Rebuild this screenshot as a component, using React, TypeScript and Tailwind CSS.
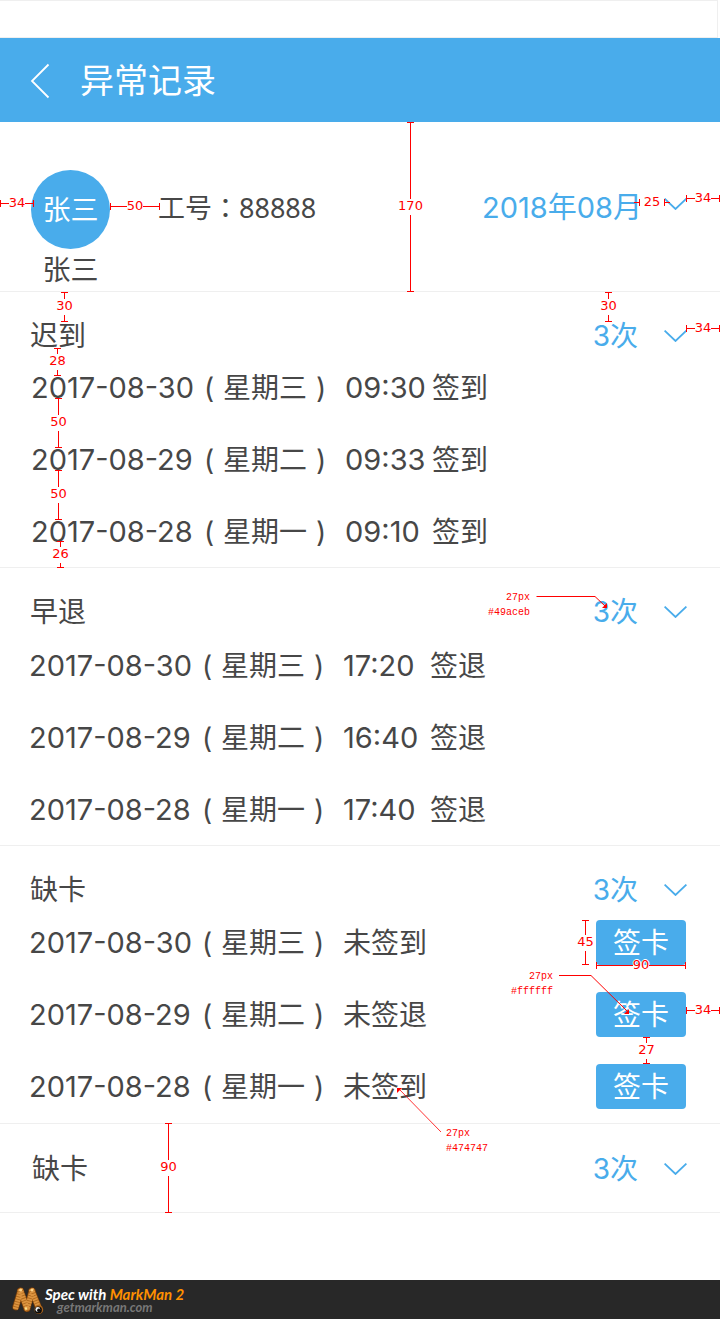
import React from "react";

const blue = "text-[#49aceb]";

function Chevron({ className = "" }: { className?: string }) {
  return (
    <svg className={`h-3 w-[23px] shrink-0 ${className}`} viewBox="0 0 23 12" fill="none" stroke="currentColor" strokeWidth="1.8" aria-hidden="true">
      <path d="M0.6 0.6 11.5 11 22.4 0.6" />
    </svg>
  );
}

function Tall({ label, className }: { label: string; className: string }) {
  return (
    <div className={`pointer-events-none absolute flex w-[21px] flex-col items-center ${className}`}>
      <i className="h-px w-[7px] bg-[#ff0000]" />
      <i className="w-px flex-1 bg-[#ff0000]" />
      <span className="pb-[2px] text-[13px] leading-[14px]">{label}</span>
      <i className="w-px flex-1 bg-[#ff0000]" />
      <i className="h-px w-[7px] bg-[#ff0000]" />
    </div>
  );
}

function Wide({ label, className }: { label: string; className: string }) {
  return (
    <div className={`pointer-events-none absolute flex h-4 items-center ${className}`}>
      <i className="h-[7px] w-px bg-[#ff0000]" />
      <i className="h-px flex-1 bg-[#ff0000]" />
      <span className="text-[13px] leading-4 [text-shadow:1px_0_#fff,-1px_0_#fff,0_1px_#fff,0_-1px_#fff]">{label}</span>
      <i className="h-px flex-1 bg-[#ff0000]" />
      <i className="h-[7px] w-px bg-[#ff0000]" />
    </div>
  );
}

function Note({ color, className }: { color: string; className: string }) {
  return (
    <div className={`pointer-events-none absolute font-['Liberation_Mono',monospace] text-[10px] leading-[15px] ${className}`}>
      <p>27px</p>
      <p>{color}</p>
    </div>
  );
}

const Marks = ({ children }: { children: React.ReactNode }) => (
  <div className="contents font-['DejaVu_Sans',sans-serif] font-normal text-[#ff0000]">{children}</div>
);

type Row = { date: string; day: string; time?: string; status: string };

type SectionProps = {
  title: string;
  headClass: string;
  listClass?: string;
  rows?: Row[];
  action?: boolean;
  children?: React.ReactNode;
};

function Section({ title, headClass, listClass = "", rows = [], action, children }: SectionProps) {
  return (
    <section className="relative border-b border-[#efefef]">
      <div className={`flex items-start justify-between pr-[33px] ${headClass}`}>
        <h2>{title}</h2>
        <button type="button" aria-expanded={rows.length > 0} className={`flex items-center gap-[26px] ${blue}`}>
          3次
          <Chevron />
        </button>
      </div>
      <ul className={listClass}>
        {rows.map((r) => (
          <li key={r.date} className="flex h-[72px] items-center justify-between pr-[34px]">
            <p className="flex items-baseline pt-[2px]">
              <span className="w-[164px] text-[29px]">{r.date}</span>
              <span className="w-7 text-center">(</span>
              <span>{r.day}</span>
              <span className="w-7 text-center">)</span>
              {r.time && <span className="ml-[10px] w-[77px] text-[29px]">{r.time}</span>}
              <span className="ml-[10px]">{r.status}</span>
            </p>
            {action && (
              <button type="button" className="h-[45px] w-[90px] rounded bg-[#49aceb] pt-[2px] text-white">
                签卡
              </button>
            )}
          </li>
        ))}
      </ul>
      {children}
    </section>
  );
}

const late: Row[] = [
  { date: "2017-08-30", day: "星期三", time: "09:30", status: "签到" },
  { date: "2017-08-29", day: "星期二", time: "09:33", status: "签到" },
  { date: "2017-08-28", day: "星期一", time: "09:10", status: "签到" },
];

const early: Row[] = [
  { date: "2017-08-30", day: "星期三", time: "17:20", status: "签退" },
  { date: "2017-08-29", day: "星期二", time: "16:40", status: "签退" },
  { date: "2017-08-28", day: "星期一", time: "17:40", status: "签退" },
];

const missing: Row[] = [
  { date: "2017-08-30", day: "星期三", status: "未签到" },
  { date: "2017-08-29", day: "星期二", status: "未签退" },
  { date: "2017-08-28", day: "星期一", status: "未签到" },
];

export default function App() {
  return (
    <div className="bg-white font-['Inter','Noto_Sans_CJK_SC',sans-serif] text-[28px] leading-8 font-[390] text-[#474747]">
      <div className="mr-[2px] h-[38px] border-y border-r border-[#efefef]" />
      <header className="flex h-[84px] items-center gap-[30px] bg-[#49aceb] pt-[2px] pl-[30px] text-white">
        <button type="button" aria-label="返回">
          <svg className="h-9 w-5" viewBox="0 0 20 36" fill="none" stroke="currentColor" strokeWidth="1.8">
            <path d="M18.5 1.5 2 18 18.5 34.5" />
          </svg>
        </button>
        <h1 className="text-[34px] leading-10">异常记录</h1>
      </header>

      <section className="relative flex h-[170px] items-start justify-between border-b border-[#efefef] pt-12 pr-[33px] pl-[31px]">
        <div className="flex gap-12">
          <div className="flex flex-col items-center">
            <div className="flex size-[79px] items-center justify-center rounded-full bg-[#49aceb] text-white">张三</div>
            <p className="leading-[42px]">张三</p>
          </div>
          <p className="font-['Noto_Sans','Noto_Sans_CJK_TC',sans-serif] text-[27px] leading-[76px]">工号：88888</p>
        </div>
        <button type="button" className={`flex h-[76px] items-center gap-[22px] ${blue}`}>
          <span className="text-[29px]">2018年08月</span>
          <Chevron className="mb-2" />
        </button>
        <Marks>
          <Wide label="34" className="top-[73px] left-0 w-[34px]" />
          <Wide label="50" className="top-[76px] left-[110px] w-[50px]" />
          <Tall label="170" className="top-0 left-[400px] h-[170px]" />
          <Wide label="34" className="top-[68px] right-0 w-[34px]" />
          <div className="pointer-events-none absolute top-[72px] right-[50px] flex h-4 w-9 items-center">
            <i className="h-px w-[5px] bg-[#ff0000]" />
            <i className="h-[7px] w-px bg-[#ff0000]" />
            <span className="flex-1 text-center text-[13px] leading-4">25</span>
            <i className="h-[7px] w-px bg-[#ff0000]" />
            <i className="h-px w-[5px] bg-[#ff0000]" />
          </div>
        </Marks>
      </section>

      <Section title="迟到" headClass="h-[59px] pt-7 pl-[30px]" listClass="pl-[31px]" rows={late}>
        <Marks>
          <Tall label="30" className="top-0 left-[54px] h-[30px]" />
          <Tall label="30" className="top-0 right-[101px] h-[30px]" />
          <Wide label="34" className="top-7 right-0 w-[34px]" />
          <Tall label="28" className="top-14 left-[47px] h-7" />
          <Tall label="50" className="top-[106px] left-12 h-[50px]" />
          <Tall label="50" className="top-[178px] left-12 h-[50px]" />
          <Tall label="26" className="top-[249px] left-[50px] h-[27px]" />
        </Marks>
      </Section>

      <Section title="早退" headClass="h-[61px] pt-7 pl-[30px]" listClass="pl-[29px]" rows={early}>
        <Marks>
          <Note color="#49aceb" className="top-[22px] right-[190px] text-right" />
          <svg className="pointer-events-none absolute top-7 right-[112px] h-3 w-[72px]" viewBox="0 0 72 12" fill="none" stroke="#ff0000" aria-hidden="true">
            <path d="M0.5 0.5H59L69 10" />
            <path d="M71 7v5h-5z" fill="#ff0000" stroke="none" />
          </svg>
        </Marks>
      </Section>

      <Section title="缺卡" headClass="h-[60px] pt-7 pl-[30px]" listClass="pb-px pl-[29px]" rows={missing} action>
        <Marks>
          <Tall label="45" className="top-[74px] right-[124px] h-[45px]" />
          <Wide label="90" className="top-[111px] right-[34px] w-[90px]" />
          <Wide label="34" className="top-[156px] right-0 w-[34px]" />
          <Tall label="27" className="top-[191px] right-[63px] h-[27px]" />
          <Note color="#ffffff" className="top-[123px] right-[167px] text-right" />
          <svg className="pointer-events-none absolute top-[129px] right-[90px] h-[39px] w-[71px]" viewBox="0 0 71 39" fill="none" stroke="#ff0000" aria-hidden="true">
            <path d="M0 0.5H32L69 37" />
            <path d="M70 34v5h-5z" fill="#ff0000" stroke="none" />
          </svg>
          <Note color="#474747" className="top-[280px] left-[446px]" />
          <svg className="pointer-events-none absolute top-[241px] left-[397px] h-[46px] w-[45px]" viewBox="0 0 45 46" fill="none" stroke="#ff0000" aria-hidden="true">
            <path d="M2 2 44 45" strokeWidth="0.8" />
            <path d="M0 6V1h5z" fill="#ff0000" stroke="none" />
          </svg>
        </Marks>
      </Section>

      <Section title="缺卡" headClass="h-[88px] pt-[29px] pl-8">
        <Marks>
          <Tall label="90" className="-top-px left-[158px] h-[90px]" />
        </Marks>
      </Section>

      <footer className="mt-[67px] flex h-[39px] items-start gap-px bg-[#282828] pl-3 font-['Lato',sans-serif] font-bold italic">
        <svg className="mt-[6px] h-[29px] w-8" viewBox="0 0 32 29" fill="none" strokeLinecap="round" aria-hidden="true">
          <g stroke="#6f3b0d" strokeWidth="7">
            <path d="M3.8 21 8.5 5" />
            <path d="M8.5 5 15 22.5" />
            <path d="M15 22.5 20 5" />
            <path d="M20 5 27 23" />
          </g>
          <g stroke="#b06a1e" strokeWidth="5.6">
            <path d="M3.8 21 8.5 5" />
            <path d="M8.5 5 15 22.5" />
            <path d="M15 22.5 20 5" />
            <path d="M20 5 27 22" />
          </g>
          <g stroke="#dc9440" strokeWidth="5.2" strokeLinecap="butt" strokeDasharray="1.7 0.9">
            <path d="M3.4 23 8 7" />
            <path d="M15.4 22 19.4 8" />
            <path d="M8 3 15.5 24" />
            <path d="M19.2 3 27 23" />
          </g>
          <circle cx="8.6" cy="4" r="1.5" fill="#ffd58a" />
          <circle cx="20" cy="4" r="1.5" fill="#ffd58a" />
          <circle cx="14" cy="22.5" r="1.3" fill="#ffe08a" />
          <circle cx="26.8" cy="23.7" r="4.4" fill="#a9621b" />
          <circle cx="26.3" cy="24" r="3.6" fill="#0c0c0c" />
          <circle cx="25.8" cy="23.4" r="2.4" fill="#f4f4f4" />
          <circle cx="26.8" cy="24.3" r="1.7" fill="#0c0c0c" />
        </svg>
        <div className="pt-[7px]">
          <p className="text-[15px] leading-[14px] text-white">
            Spec with <span className="text-[#ff9000]">MarkMan 2</span>
          </p>
          <p className="pl-3 text-[13px] leading-3 text-[#777777]">getmarkman.com</p>
        </div>
      </footer>
    </div>
  );
}
